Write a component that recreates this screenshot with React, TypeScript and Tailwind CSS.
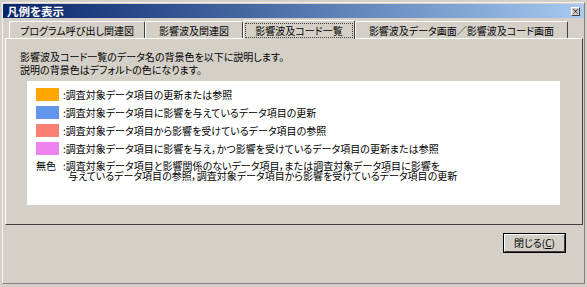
import React from "react";

const font = { fontFamily: '"Noto Sans CJK JP", "Liberation Sans", sans-serif' };

function Tab({ label, selected, w }: { label: string; selected?: boolean; w: string }) {
  if (selected) {
    return (
      <div className={`${w} h-[19px] -mt-[2px] relative z-10 bg-[#d4d0c8] border-l border-t border-white border-r border-r-[#404040] rounded-t-[2px] flex items-center justify-center -mb-[1px]`}>
        <span className="border border-dotted border-[#404040] px-[9px] leading-[13px]">{label}</span>
      </div>
    );
  }
  return (
    <div className={`${w} h-[17px] bg-[#d4d0c8] border-l border-t border-white border-r border-r-[#404040] rounded-t-[2px] flex items-center justify-center`}>
      <span className="leading-[13px]">{label}</span>
    </div>
  );
}

function Row({ color, text }: { color: string; text: string }) {
  return (
    <div className="h-[18px] flex items-start">
      <div className={`w-[23px] h-[13px] ${color}`} />
      <span className="ml-[4px] leading-[13px]">:{text}</span>
    </div>
  );
}

export default function App() {
  return (
    <div
      className="w-[587px] h-[287px] bg-[#d4d0c8] pl-[2px] pr-[2px] pt-[2px] pb-[3px] text-[10px] text-black [font-feature-settings:'palt']"
      style={font}
    >
      <div className="h-full flex flex-col border-l border-t border-[#f4f3ef] border-r border-b border-r-[#808080] border-b-[#808080]">
        <div className="h-[14px] mt-[1px] mx-0 bg-gradient-to-r from-[#0a246a] to-[#a6caf0] flex items-center justify-between pl-[4px] pr-[4px]">
          <span className="text-white font-bold text-[11.5px] leading-[14px]">凡例を表示</span>
          <div className="w-[9px] h-[9px] bg-[#d4d0c8] border-t border-l border-white border-r border-b border-r-[#404040] border-b-[#404040] flex items-center justify-center text-[8px] leading-[8px]">
            ×
          </div>
        </div>

        <div className="mt-[3px] pl-[6px] flex items-end h-[17px]">
          <Tab label="プログラム呼び出し関連図" w="w-[136px]" />
          <Tab label="影響波及関連図" w="w-[98px]" />
          <Tab label="影響波及コード一覧" selected w="w-[112px]" />
          <Tab label="影響波及データ画面／影響波及コード画面" w="w-[213px]" />
        </div>

        <div className="ml-[2px] mr-[1px] h-[187px] border-l border-t border-white border-r border-b border-r-[#404040] border-b-[#404040] pl-[14px] pt-[11px]">
          <div className="leading-[13px]">影響波及コード一覧のデータ名の背景色を以下に説明します。</div>
          <div className="leading-[13px]">説明の背景色はデフォルトの色になります。</div>
          <div className="ml-[7px] mt-[5px] w-[533px] h-[124px] bg-white pl-[9px] pt-[7px]">
            <Row color="bg-[#ffa500]" text="調査対象データ項目の更新または参照" />
            <Row color="bg-[#6495ed]" text="調査対象データ項目に影響を与えているデータ項目の更新" />
            <Row color="bg-[#fa8072]" text="調査対象データ項目から影響を受けているデータ項目の参照" />
            <Row color="bg-[#ee82ee]" text="調査対象データ項目に影響を与え，かつ影響を受けているデータ項目の更新または参照" />
            <div className="flex items-start">
              <div className="w-[23px] leading-[12px]">無色</div>
              <div className="ml-[4px] leading-[10px] pt-[1px]">
                <div>:調査対象データ項目と影響関係のないデータ項目，または調査対象データ項目に影響を</div>
                <div className="pl-[5px]">与えているデータ項目の参照，調査対象データ項目から影響を受けているデータ項目の更新</div>
              </div>
            </div>
          </div>
        </div>

        <div className="flex justify-end mt-[8px] mr-[18px]">
          <div className="w-[63px] h-[20px] border border-black">
            <div className="w-full h-full border-t border-l border-white border-r border-b border-r-[#404040] border-b-[#404040] flex items-center justify-center leading-[12px]">
              <span>閉じる(<span className="underline">C</span>)</span>
            </div>
          </div>
        </div>
      </div>
    </div>
  );
}
